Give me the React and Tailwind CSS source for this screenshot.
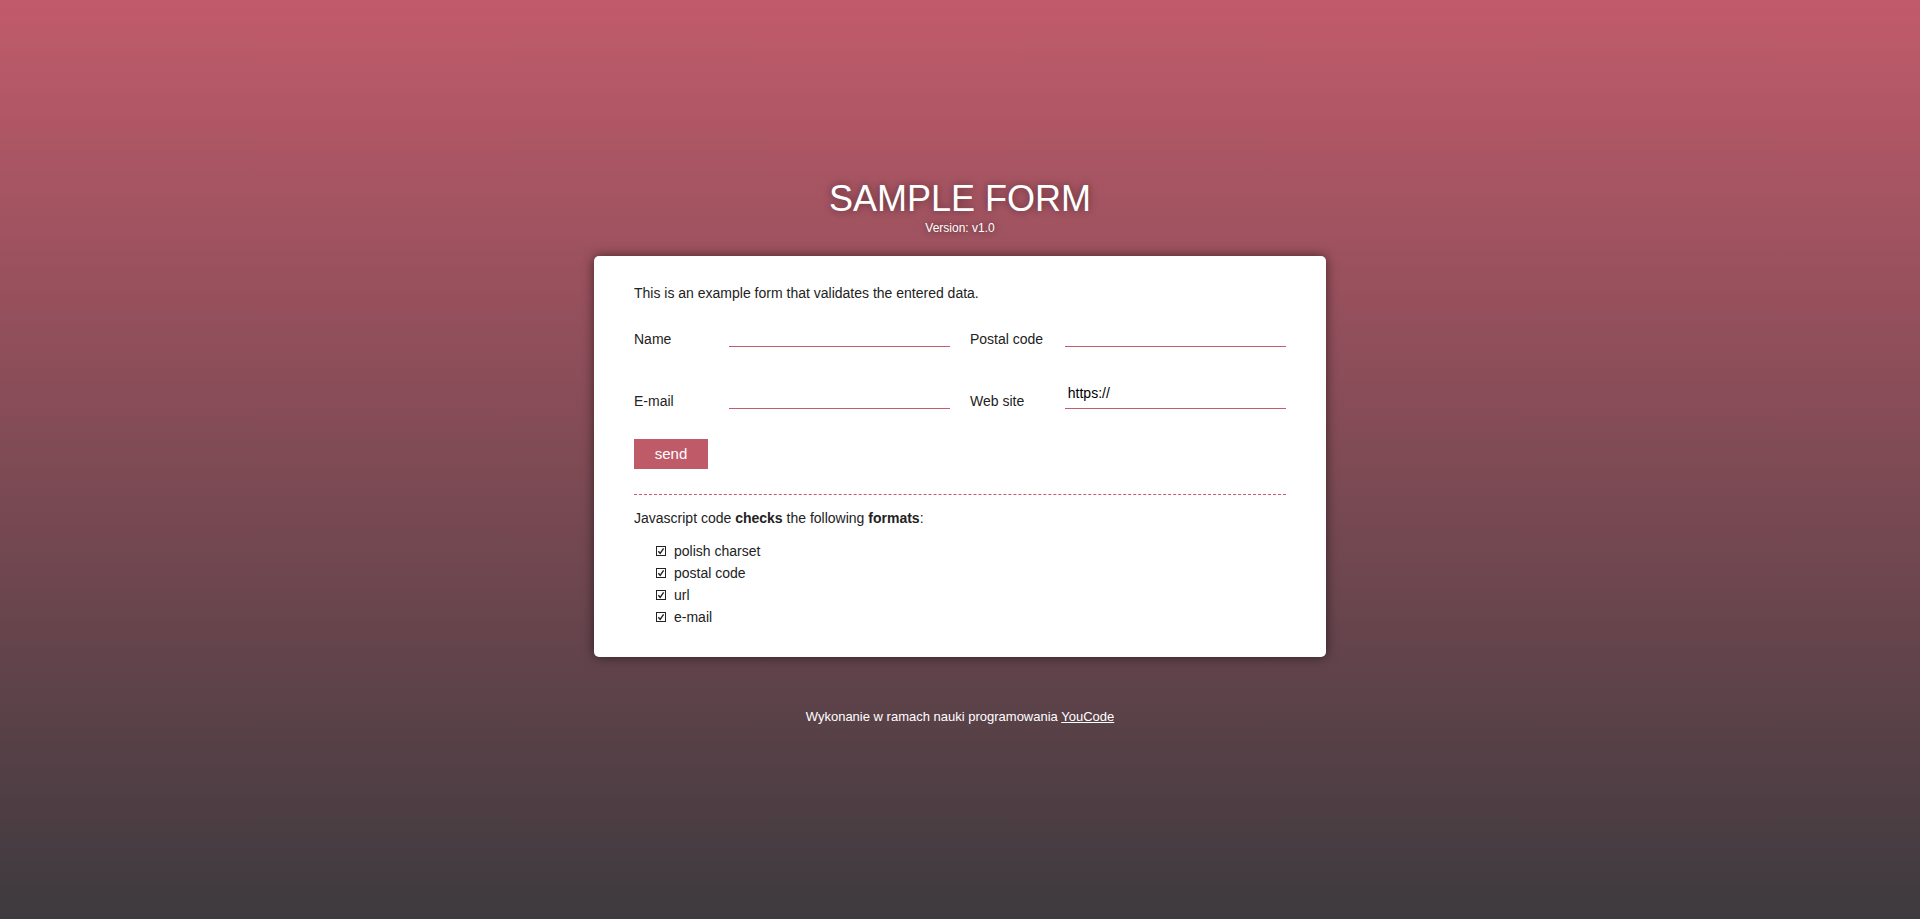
import React from 'react';

const fields = [
  [
    { label: 'Name', value: '' },
    { label: 'Postal code', value: '' },
  ],
  [
    { label: 'E-mail', value: '' },
    { label: 'Web site', value: 'https://' },
  ],
];

const formats = ['polish charset', 'postal code', 'url', 'e-mail'];

function CheckIcon() {
  return (
    <svg width="10" height="10" viewBox="0 0 10 10" className="shrink-0">
      <rect x="0.5" y="0.5" width="9" height="9" fill="none" stroke="#222" strokeWidth="1" />
      <path d="M2.3 5.2 L4.2 7.3 L7.6 2.4" fill="none" stroke="#222" strokeWidth="1.4" />
    </svg>
  );
}

function Field({ label, value }) {
  return (
    <div className="flex items-start h-8">
      <label className="w-[30%] mt-4 leading-4">{label}</label>
      <input
        type="text"
        defaultValue={value}
        className="flex-1 h-8 px-[3px] border-b border-b-[#c45c6e] bg-transparent text-black text-sm outline-none"
      />
    </div>
  );
}

export default function App() {
  return (
    <div className="min-h-[919px] w-full bg-[linear-gradient(to_bottom,#c15b6b,#3d3a3e)] font-['Liberation_Sans',Arial,sans-serif] flex flex-col items-center pt-[178px]">
      <h1 className="text-[36px] leading-[41px] text-white [text-shadow:0_0_8px_rgba(0,0,0,0.45)]">
        SAMPLE FORM
      </h1>
      <p className="text-xs leading-[14px] mt-[2px] text-white [text-shadow:0_0_6px_rgba(0,0,0,0.5)]">
        Version: v1.0
      </p>

      <div className="mt-[21px] w-[732px] bg-white rounded-[5px] shadow-[0_0_12px_rgba(0,0,0,0.55)] px-10 pt-[27px] pb-[29px] text-sm text-[#222]">
        <p className="leading-5">This is an example form that validates the entered data.</p>

        <form className="mt-3" onSubmit={(e) => e.preventDefault()}>
          <div className="flex flex-col gap-[30px]">
            {fields.map((row, i) => (
              <div key={i} className="grid grid-cols-2 gap-x-5">
                {row.map((f) => (
                  <Field key={f.label} {...f} />
                ))}
              </div>
            ))}
          </div>
          <button
            type="submit"
            className="mt-[30px] w-[74px] h-[30px] bg-[#bf5a69] text-white text-[15px]"
          >
            send
          </button>
        </form>

        <div className="mt-[25px] h-0 border-t border-dashed border-t-[#c85a6e]" />

        <p className="mt-[13px] leading-5">
          Javascript code <b>checks</b> the following <b>formats</b>:
        </p>
        <ul className="mt-3 pl-[22px]">
          {formats.map((f) => (
            <li key={f} className="flex items-center leading-[22px]">
              <CheckIcon />
              <span className="ml-[8px]">{f}</span>
            </li>
          ))}
        </ul>
      </div>

      <p className="mt-[52px] text-[13px] leading-4 text-white">
        Wykonanie w ramach nauki programowania{' '}
        <a href="#" className="underline">
          YouCode
        </a>
      </p>
    </div>
  );
}
